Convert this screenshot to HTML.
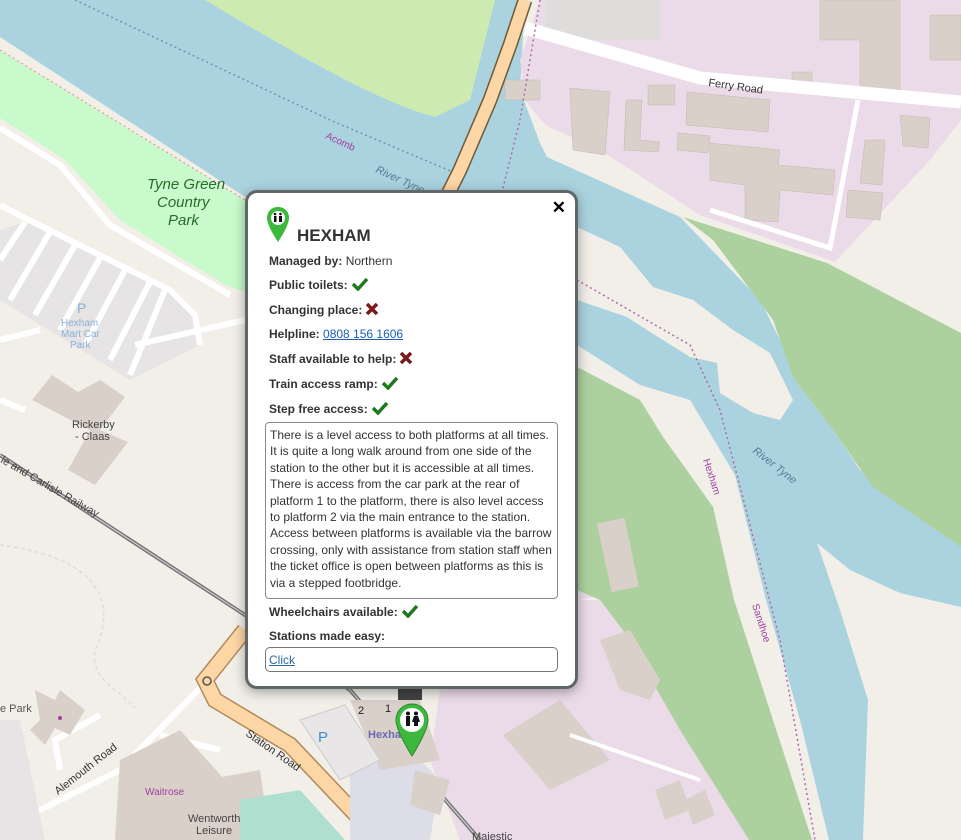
<!DOCTYPE html>
<html><head><meta charset="utf-8"><style>
body{margin:0;width:961px;height:840px;overflow:hidden;position:relative;font-family:"Liberation Sans",Arial,sans-serif;}
#map{position:absolute;left:0;top:0}
.pop{position:absolute;left:245px;top:190px;width:327px;height:493px;background:#fff;border:3px solid #5f6769;border-radius:12px;box-shadow:0 3px 12px rgba(0,0,0,.35);}
.row{position:absolute;left:21px;font-size:12px;font-weight:bold;color:#333;white-space:nowrap}
.row span{font-weight:normal}
.ta{position:absolute;left:17px;top:229px;border:1px solid #8a8a8a;border-radius:4px;font-size:12px;line-height:16.4px;color:#333;padding:4px 0 0 4px;white-space:pre;box-sizing:border-box;width:293px;height:177px}
.ck{display:inline-block;vertical-align:-2px;margin-left:3px}
a{color:#1a5fb4}
</style></head><body>
<svg id="map" width="961" height="840" viewBox="0 0 961 840">
<rect width="961" height="840" fill="#f2efe9"/>
<polygon fill="#aad3df" points="0,0 525,0 520,90 540,143 547,157 680,217 760,300 800,380 860,470 961,530 961,625 900,600 870,640 885,720 875,840 820,840 780,720 740,620 690,530 660,460 600,400 578,380 500,300 245,197 0,37"/>
<path d="M75,0 L330,120 L460,175" stroke="#7a8fa8" stroke-width="1.5" stroke-dasharray="2,3" fill="none"/>
<polygon fill="#ebdbe8" points="520,60 540,0 961,0 961,120 930,160 835,262 700,215 600,150 545,125 525,100"/>
<polygon fill="#dfdcdc" points="545,0 660,0 660,40 545,40"/>
<path fill="#cdebb0" d="M205,0 L495,0 L470,100 L435,117 C390,105 330,75 205,0Z"/>
<polygon fill="#c8facc" points="0,50 245,200 245,292 225,285 120,220 65,160 0,118"/>
<path d="M0,50 L245,200" stroke="#e88" stroke-width="1" stroke-dasharray="2,3" fill="none"/>
<polygon fill="#add19e" points="683,217 827,263 961,333 961,547 873,487 833,430 793,377 773,320 713,240"/>
<polygon fill="#f2efe9" points="577,227 620,247 653,287 693,300 733,330 770,353 793,400 780,420 753,413 720,393 717,363 690,357 647,330 627,317 577,300"/>
<polygon fill="#f2efe9" points="577,345 640,385 690,400 735,475 766,600 800,720 829,840 812,840 760,680 734,600 713,507 663,437 640,400 577,367"/>
<polygon fill="#ebdbe8" points="440,690 577,600 600,600 622,629 680,730 749,840 460,840 430,760"/>
<polygon fill="#ebdbe8" points="577,440 600,450 640,590 577,600"/>
<polygon fill="#add19e" points="577,367 640,400 663,437 713,507 734,600 760,680 812,840 749,840 680,730 622,629 600,600 577,590"/>
<polygon fill="#f2efe9" points="817,543 850,570 900,593 961,607 961,840 863,840 868,700 840,610"/>
<rect x="604" y="520" width="28" height="70" fill="#d9d0c9" transform="rotate(-12 618 555)"/>
<g fill="#d9d0c9" stroke="#c5b8ae" stroke-width="0.5">
<polygon points="570,88 610,92 605,155 573,150"/><polygon points="626,100 642,100 640,140 660,142 658,152 624,150"/><polygon points="687,92 770,100 768,132 686,125"/><polygon points="710,143 780,150 778,165 835,170 833,195 780,190 778,222 745,220 745,185 710,180"/><polygon points="678,133 710,136 708,153 677,150"/><polygon points="865,140 885,140 882,185 860,183"/><polygon points="848,190 883,193 880,220 846,217"/><polygon points="900,115 930,118 928,148 903,146"/><polygon points="930,15 961,15 961,60 930,60"/><polygon points="820,0 900,0 900,90 860,90 860,40 820,40"/><polygon points="648,85 675,85 675,105 648,105"/><polygon points="792,72 812,72 812,88 792,88"/><polygon points="505,80 540,80 540,100 505,100"/></g>
<path d="M525,28 L700,78 L961,102" stroke="#fff" stroke-width="13" fill="none"/>
<path d="M858,100 L830,248 L710,210" stroke="#fff" stroke-width="5" fill="none"/>
<path d="M525,0 L510,45 L490,100 L460,170 L445,200" stroke="#6e5a3c" stroke-width="15" fill="none"/>
<path d="M525,0 L510,45 L490,100 L460,170 L445,200" stroke="#fcd6a4" stroke-width="12" fill="none"/>
<path d="M540,0 L520,120 L500,200" stroke="#b06aa8" stroke-width="1.5" stroke-dasharray="2,3" fill="none"/>
<path d="M577,280 L690,345 L720,410 L780,640 L815,840" stroke="#b06aa8" stroke-width="1.5" stroke-dasharray="2,3" fill="none"/>
<text x="708" y="86" font-size="11" fill="#333" transform="rotate(8 708 86)">Ferry Road</text>
<text x="375" y="172" font-size="11" fill="#5a7a9a" font-style="italic" transform="rotate(25 375 172)">River Tyne</text>
<text x="325" y="138" font-size="10" fill="#a040a0" transform="rotate(25 325 138)">Acomb</text>
<text x="752" y="452" font-size="11" fill="#5a7a9a" font-style="italic" transform="rotate(38 752 452)">River Tyne</text>
<text x="703" y="460" font-size="10" fill="#a040a0" transform="rotate(72 703 460)">Hexham</text>
<text x="752" y="605" font-size="10" fill="#a040a0" transform="rotate(72 752 605)">Sandhoe</text>
<text x="147" y="189" font-size="15" fill="#2a6a2a" font-style="italic">Tyne Green</text>
<text x="157" y="207" font-size="15" fill="#2a6a2a" font-style="italic">Country</text>
<text x="168" y="225" font-size="15" fill="#2a6a2a" font-style="italic">Park</text>
<polygon fill="#e6e4e4" points="0,230 25,222 170,290 195,315 200,345 130,380 0,300"/>
<g stroke="#fff" stroke-width="6" fill="none">
<path d="M0,128 L60,165 L110,225 L230,295"/><path d="M0,205 L25,218 L170,290 L195,315 L200,345"/><path d="M135,345 L245,320"/>
<path d="M25,222 L0,260"/><path d="M50,232 L10,300"/><path d="M75,245 L35,315"/><path d="M100,258 L60,330"/><path d="M125,270 L85,345"/><path d="M150,282 L110,360"/><path d="M165,290 L130,375"/>
<path d="M0,340 L40,330"/><path d="M0,400 L25,410"/>
<path d="M0,830 L120,770 L205,683"/><path d="M60,770 L55,740 L100,715"/><path d="M160,735 L220,750"/>
</g>
<polygon fill="#e6e4e4" points="0,720 20,720 45,840 0,840"/>
<text x="77" y="313" font-size="14" fill="#8ab0d8">P</text>
<text x="61" y="326" font-size="10" fill="#8ab0d8">Hexham</text>
<text x="61" y="337" font-size="10" fill="#8ab0d8">Mart Car</text>
<text x="70" y="348" font-size="10" fill="#8ab0d8">Park</text>
<polygon fill="#d9d0c9" points="52,375 78,392 100,380 125,397 100,430 128,442 95,485 68,470 90,430 32,400"/>
<text x="72" y="428" font-size="11" fill="#444">Rickerby</text>
<text x="75" y="440" font-size="11" fill="#444">- Claas</text>
<polygon fill="#d9d0c9" points="35,690 55,700 60,690 85,710 70,735 55,728 45,745 30,730 40,720"/>
<circle cx="60" cy="718" r="2" fill="#a040a0"/>
<text x="0" y="712" font-size="11" fill="#555">e Park</text>
<path d="M0,545 C120,560 110,620 95,650 C90,680 120,690 135,708" stroke="#ddd" stroke-width="1.5" stroke-dasharray="4,3" fill="none"/>
<path d="M0,455 L245,615 L350,690 L480,840" stroke="#777" stroke-width="4" fill="none"/>
<path d="M0,455 L245,615 L350,690 L480,840" stroke="#ddd" stroke-width="1" fill="none"/>
<text x="0" y="462" font-size="11" fill="#444" transform="rotate(30 0 462)">le and Carlisle Railway</text>
<path d="M245,630 L205,680 L215,700 L290,745 L380,840" stroke="#b08a5c" stroke-width="17" fill="none"/>
<path d="M245,630 L205,680 L215,700 L290,745 L380,840" stroke="#fcd6a4" stroke-width="14" fill="none"/>
<circle cx="207" cy="681" r="4" fill="none" stroke="#555" stroke-width="1.5"/>
<text x="245" y="735" font-size="11" fill="#333" transform="rotate(35 245 735)">Station Road</text>
<text x="58" y="795" font-size="11" fill="#333" transform="rotate(-38 58 795)">Alemouth Road</text>
<polygon fill="#dddde8" points="350,760 400,740 440,780 430,840 350,840"/>
<polygon fill="#d9d0c9" points="350,700 420,700 440,760 380,770"/>
<polygon fill="#e8e6e6" stroke="#ccc" points="300,720 345,705 380,760 340,780"/>
<text x="318" y="742" font-size="15" fill="#3a8cd0">P</text>
<polygon fill="#d9d0c9" points="415,770 450,780 440,815 410,805"/>
<polygon fill="#d9d0c9" points="503,735 560,700 610,760 550,790"/>
<polygon fill="#d9d0c9" points="600,640 630,630 660,680 650,700 620,690"/>
<polygon fill="#d9d0c9" points="655,790 680,780 690,810 665,820"/><polygon fill="#d9d0c9" points="685,800 705,790 715,815 693,825"/>
<path d="M570,735 L700,780" stroke="#fff" stroke-width="4"/>
<polygon fill="#d9d0c9" points="120,760 180,730 225,780 200,840 115,840"/>
<polygon fill="#d9d0c9" points="205,780 260,770 270,840 190,840"/>
<polygon fill="#aedfcf" points="240,800 300,790 345,840 240,840"/>
<text x="145" y="795" font-size="10" fill="#a040a0">Waitrose</text>
<text x="188" y="822" font-size="11" fill="#444">Wentworth</text>
<text x="196" y="834" font-size="11" fill="#444">Leisure</text>
<text x="368" y="738" font-size="11" font-weight="bold" fill="#6a6ab0">Hexham</text>
<text x="358" y="714" font-size="11" fill="#222">2</text><text x="385" y="712" font-size="11" fill="#222">1</text>
<text x="472" y="840" font-size="11" fill="#444">Majestic</text>
<rect x="398" y="686" width="24" height="14" fill="#444"/>
<g transform="translate(396,704)">
<path d="M16,0 C7,0 0,7 0,16 C0,27 16,52 16,52 C16,52 32,27 32,16 C32,7 25,0 16,0Z" fill="#3cb93c" stroke="#2a8a2a"/>
<circle cx="16" cy="16" r="12" fill="#fff"/>
<rect x="10" y="12" width="4" height="10" fill="#111"/><circle cx="12" cy="9.5" r="2" fill="#111"/>
<path d="M18,12 h4 l2,6 h-2 v4 h-4 v-4 h-2z" fill="#111"/><circle cx="20" cy="9.5" r="2" fill="#111"/>
</g>
</svg>
<div class="pop">
<svg style="position:absolute;left:19px;top:14px" width="22" height="36" viewBox="0 0 22 36"><path d="M11,0 C4,0 0,5 0,11 C0,19 11,35 11,35 C11,35 22,19 22,11 C22,5 18,0 11,0Z" fill="#3cb93c"/><circle cx="11" cy="11" r="7" fill="#fff"/><rect x="7" y="9" width="2.5" height="6" fill="#111"/><rect x="12" y="9" width="3" height="6" fill="#111"/><circle cx="8" cy="7" r="1.3" fill="#111"/><circle cx="13.5" cy="7" r="1.3" fill="#111"/></svg>
<div style="position:absolute;right:9px;top:5px;font-size:17px;font-weight:bold">✕</div>
<div class="row" style="top:33px;font-size:17px;left:49px">HEXHAM</div>
<div class="row" style="top:61px">Managed by: <span>Northern</span></div>
<div class="row" style="top:84px">Public toilets:<svg class="ck" width="18" height="14"><path d="M2,7 L7,12 L16,2" stroke="#1e7a1e" stroke-width="3.5" fill="none"/></svg></div>
<div class="row" style="top:109px">Changing place:<svg class="ck" width="14" height="14"><path d="M2,2 L12,12 M12,2 L2,12" stroke="#7a1a1a" stroke-width="3.5"/></svg></div>
<div class="row" style="top:134px">Helpline: <a href="#" style="font-weight:normal">0808 156 1606</a></div>
<div class="row" style="top:158px">Staff available to help:<svg class="ck" width="14" height="14"><path d="M2,2 L12,12 M12,2 L2,12" stroke="#7a1a1a" stroke-width="3.5"/></svg></div>
<div class="row" style="top:183px">Train access ramp:<svg class="ck" width="18" height="14"><path d="M2,7 L7,12 L16,2" stroke="#1e7a1e" stroke-width="3.5" fill="none"/></svg></div>
<div class="row" style="top:208px">Step free access:<svg class="ck" width="18" height="14"><path d="M2,7 L7,12 L16,2" stroke="#1e7a1e" stroke-width="3.5" fill="none"/></svg></div>
<div class="ta">There is a level access to both platforms at all times.
It is quite a long walk around from one side of the
station to the other but it is accessible at all times.
There is access from the car park at the rear of
platform 1 to the platform, there is also level access
to platform 2 via the main entrance to the station.
Access between platforms is available via the barrow
crossing, only with assistance from station staff when
the ticket office is open between platforms as this is
via a stepped footbridge.</div>
<div class="row" style="top:411px">Wheelchairs available:<svg class="ck" width="18" height="14"><path d="M2,7 L7,12 L16,2" stroke="#1e7a1e" stroke-width="3.5" fill="none"/></svg></div>
<div class="row" style="top:436px">Stations made easy:</div>
<div style="position:absolute;left:17px;top:454px;width:293px;height:25px;border:1px solid #777;border-radius:5px;box-sizing:border-box;font-size:12px;padding:5px 0 0 3px"><a href="#" style="color:#2a6a9a">Click</a></div>
</div>
</body></html>
